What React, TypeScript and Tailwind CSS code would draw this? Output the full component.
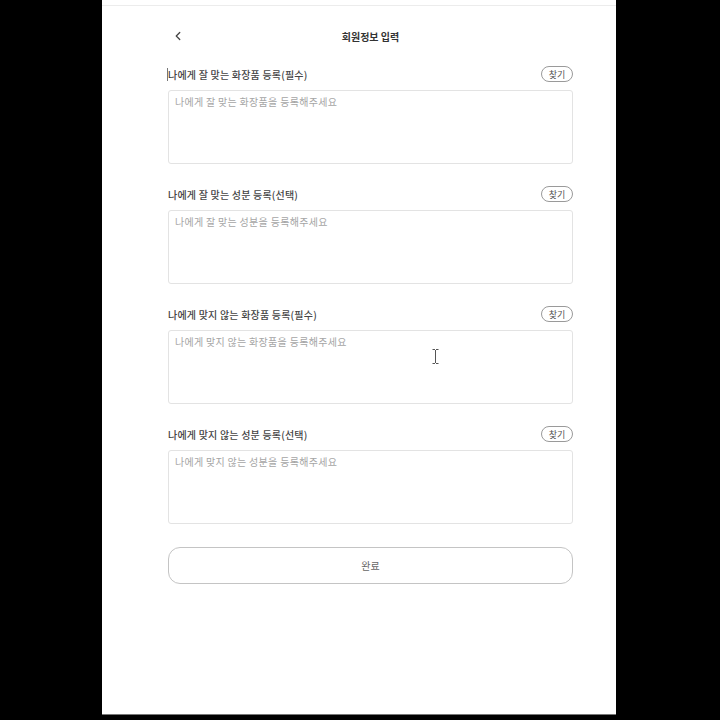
import { ChevronLeft } from "lucide-react";

const sections = [
  { label: "나에게 잘 맞는 화장품 등록(필수)", placeholder: "나에게 잘 맞는 화장품을 등록해주세요" },
  { label: "나에게 잘 맞는 성분 등록(선택)", placeholder: "나에게 잘 맞는 성분을 등록해주세요" },
  { label: "나에게 맞지 않는 화장품 등록(필수)", placeholder: "나에게 맞지 않는 화장품을 등록해주세요" },
  { label: "나에게 맞지 않는 성분 등록(선택)", placeholder: "나에게 맞지 않는 성분을 등록해주세요" },
];

export default function App() {
  return (
    <div
      className="relative h-[720px] w-[720px] bg-black"
      style={{ fontFamily: '"Noto Sans CJK KR", "Noto Sans", sans-serif' }}
    >
      <div className="ml-[102px] h-[715px] w-[514px] border-b border-[#777] bg-white">
        <div className="h-[5px]" />
        <div className="border-t border-[#ececec]" />
        {/* header */}
        <div className="ml-[66px] mt-[19px] flex h-[22px] w-[405px] items-center">
          <ChevronLeft className="ml-[3px] h-[14px] w-[14px] text-[#444]" strokeWidth={2.25} />
          <div className="flex-1 pr-[17px] text-center text-[10px] font-bold text-[#333]">회원정보 입력</div>
        </div>

        <div className="ml-[66px] mt-[19px] flex w-[405px] flex-col gap-[22px]">
          {sections.map((s, i) => (
            <div key={i} className="flex flex-col gap-[8px]">
              <div className="flex h-[16px] items-center justify-between">
                <div className="flex items-center text-[10px] font-medium tracking-[0.2px] text-[#444]">
                  {i === 0 && <span className="-ml-px inline-block h-[13px] w-px bg-[#777]" />}
                  {s.label}
                </div>
                <button className="flex h-[16px] w-[32px] items-center justify-center rounded-full border border-[#9a9a9a] text-[9px] leading-none text-[#555]">
                  찾기
                </button>
              </div>
              <div className="h-[74px] rounded-[3px] border border-[#e3e3e3] px-[6px] pt-[3px] text-[10px] tracking-[0.3px] text-[#a5a5a5]">
                {s.placeholder}
              </div>
            </div>
          ))}
          <button className="mt-px flex h-[37px] items-center justify-center rounded-[12px] border border-[#c4c4c4] text-[10px] text-[#666]">
            완료
          </button>
        </div>
      </div>

      {/* mouse I-beam cursor */}
      <svg className="absolute left-[432px] top-[349px]" width="7" height="15" viewBox="0 0 7 15">
        <path d="M0.5 0.5h2.5M4 0.5h2.5M3.5 1v13M0.5 14.5h2.5M4 14.5h2.5" stroke="#555" strokeWidth="1" fill="none" />
      </svg>
    </div>
  );
}
